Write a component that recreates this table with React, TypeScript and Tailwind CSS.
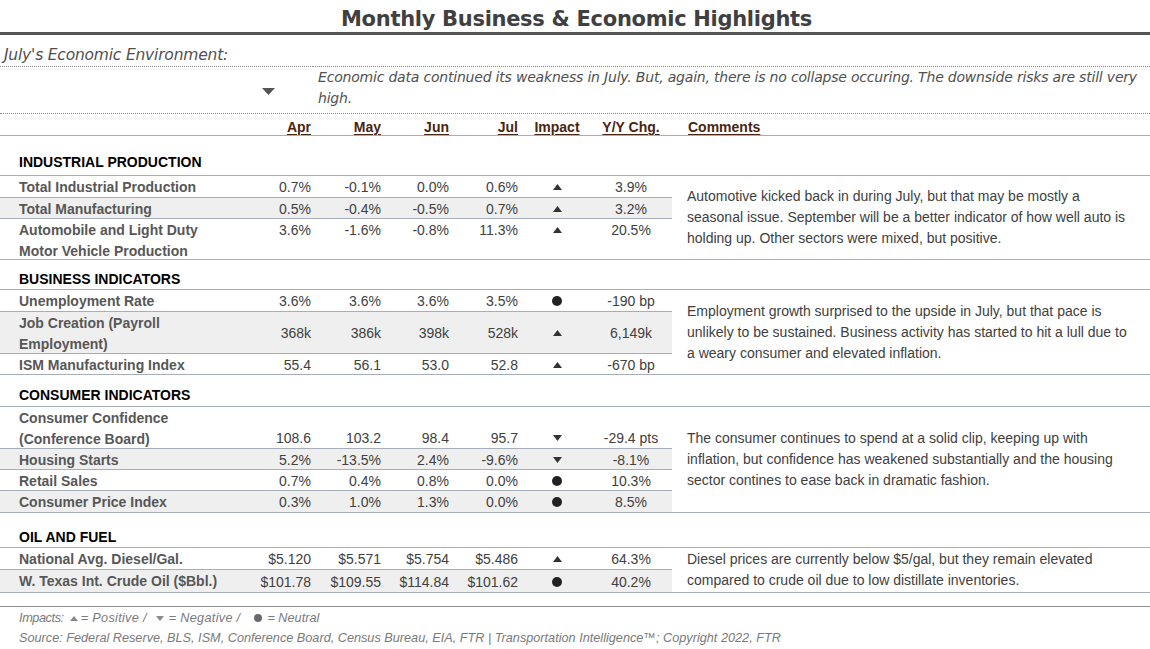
import React from "react";

type Impact = "up" | "down" | "dot";

interface Row {
  label: string[];
  vals: string[];
  imp: Impact;
  yy: string;
  h: string;
  align?: "start" | "center" | "end";
  gray?: boolean;
}

interface Section {
  title: string;
  head: string;
  comment: string[];
  rows: Row[];
}

const sections: Section[] = [
  {
    title: "INDUSTRIAL PRODUCTION",
    head: "h-[39px] pt-[16px]",
    comment: [
      "Automotive kicked back in during July, but that may be mostly a",
      "seasonal issue. September will be a better indicator of how well auto is",
      "holding up. Other sectors were mixed, but positive.",
    ],
    rows: [
      { label: ["Total Industrial Production"], vals: ["0.7%", "-0.1%", "0.0%", "0.6%"], imp: "up", yy: "3.9%", h: "h-[22px]" },
      { label: ["Total Manufacturing"], vals: ["0.5%", "-0.4%", "-0.5%", "0.7%"], imp: "up", yy: "3.2%", h: "h-[21px]", gray: true },
      {
        label: ["Automobile and Light Duty", "Motor Vehicle Production"],
        vals: ["3.6%", "-1.6%", "-0.8%", "11.3%"],
        imp: "up",
        yy: "20.5%",
        h: "h-[40px]",
        align: "start",
      },
    ],
  },
  {
    title: "BUSINESS INDICATORS",
    head: "h-[29px] pt-[9px]",
    comment: [
      "Employment growth surprised to the upside in July, but that pace is",
      "unlikely to be sustained. Business activity has started to hit a lull due to",
      "a weary consumer and elevated inflation.",
    ],
    rows: [
      { label: ["Unemployment Rate"], vals: ["3.6%", "3.6%", "3.6%", "3.5%"], imp: "dot", yy: "-190 bp", h: "h-[22px]" },
      {
        label: ["Job Creation (Payroll", "Employment)"],
        vals: ["368k", "386k", "398k", "528k"],
        imp: "up",
        yy: "6,149k",
        h: "h-[42px]",
        gray: true,
      },
      { label: ["ISM Manufacturing Index"], vals: ["55.4", "56.1", "53.0", "52.8"], imp: "up", yy: "-670 bp", h: "h-[20px]" },
    ],
  },
  {
    title: "CONSUMER INDICATORS",
    head: "h-[31px] pt-[10px]",
    comment: [
      "The consumer continues to spend at a solid clip, keeping up with",
      "inflation, but confidence has weakened substantially and the housing",
      "sector contines to ease back in dramatic fashion.",
    ],
    rows: [
      {
        label: ["Consumer Confidence", "(Conference Board)"],
        vals: ["108.6", "103.2", "98.4", "95.7"],
        imp: "down",
        yy: "-29.4 pts",
        h: "h-[42px]",
        align: "end",
      },
      { label: ["Housing Starts"], vals: ["5.2%", "-13.5%", "2.4%", "-9.6%"], imp: "down", yy: "-8.1%", h: "h-[21px]", gray: true },
      { label: ["Retail Sales"], vals: ["0.7%", "0.4%", "0.8%", "0.0%"], imp: "dot", yy: "10.3%", h: "h-[21px]" },
      { label: ["Consumer Price Index"], vals: ["0.3%", "1.0%", "1.3%", "0.0%"], imp: "dot", yy: "8.5%", h: "h-[21px]", gray: true },
    ],
  },
  {
    title: "OIL AND FUEL",
    head: "h-[34px] pt-[14px]",
    comment: [
      "Diesel prices are currently below $5/gal, but they remain elevated",
      "compared to crude oil due to low distillate inventories.",
    ],
    rows: [
      { label: ["National Avg. Diesel/Gal."], vals: ["$5.120", "$5.571", "$5.754", "$5.486"], imp: "up", yy: "64.3%", h: "h-[22px]" },
      {
        label: ["W. Texas Int. Crude Oil ($Bbl.)"],
        vals: ["$101.78", "$109.55", "$114.84", "$101.62"],
        imp: "dot",
        yy: "40.2%",
        h: "h-[22px]",
        gray: true,
      },
    ],
  },
];

const valWidths = ["w-[66px]", "w-[70px]", "w-[68px]", "w-[69px]"];

const UpIcon = () => (
  <svg width="9" height="6" viewBox="0 0 9 6">
    <path d="M4.5 0 L9 6 L0 6 Z" fill="#333" />
  </svg>
);

const DownIcon = () => (
  <svg width="9" height="6" viewBox="0 0 9 6">
    <path d="M0 0 L9 0 L4.5 6 Z" fill="#333" />
  </svg>
);

const DotIcon = () => (
  <svg width="10" height="10" viewBox="0 0 10 10">
    <circle cx="5" cy="5" r="5" fill="#222" />
  </svg>
);

const ImpactIcon = ({ kind }: { kind: Impact }) => {
  if (kind === "up") return <UpIcon />;
  if (kind === "down") return <DownIcon />;
  return <DotIcon />;
};

const alignClass = {
  start: "items-start",
  center: "items-center",
  end: "items-end",
};

const DataRow = ({ row, last }: { row: Row; last: boolean }) => (
  <div
    className={`flex ${row.h} ${last ? "" : "border-b border-[#a6aeb9]"} ${
      row.gray ? "bg-[#efefef]" : ""
    }`}
  >
    <div className="w-[245px] pl-[19px] pt-[1px] font-bold text-[#575757] leading-[20.5px]">
      {row.label.map((l) => (
        <div key={l}>{l}</div>
      ))}
    </div>
    <div className={`flex flex-1 ${alignClass[row.align ?? "center"]} pt-[1px]`}>
      {row.vals.map((v, i) => (
        <div key={i} className={`${valWidths[i]} text-right leading-[20px] text-[#404040]`}>
          {v}
        </div>
      ))}
      <div className="w-[78px] h-[20px] flex items-center justify-center">
        <ImpactIcon kind={row.imp} />
      </div>
      <div className="w-[70px] text-center leading-[20px] text-[#404040]">{row.yy}</div>
    </div>
  </div>
);

const App = () => {
  return (
    <div className="w-[1150px] h-[649px] bg-white overflow-hidden font-['Liberation_Sans',Arial,sans-serif] text-[14px]">
      <div className="h-[35px] border-b-[3px] border-[#555] flex items-center justify-center pt-[7px]">
        <span className="font-['DejaVu_Sans',sans-serif] font-bold text-[21px] tracking-[-0.3px] text-[#404040] pl-[3px]">
          Monthly Business &amp; Economic Highlights
        </span>
      </div>

      <div className="flex h-[32px]">
        <div className="w-[313px] border-b border-dotted border-[#8a8a8a] flex items-end pl-[4px] pb-[1px]">
          <span className="font-['DejaVu_Sans',sans-serif] italic text-[15.5px] tracking-[-0.2px] text-[#505050] leading-[20px]">
            July's Economic Environment:
          </span>
        </div>
        <div className="flex-1 border-b border-dotted border-[#7088c8]" />
      </div>

      <div className="flex h-[47px] border-b border-dotted border-[#8a8a8a]">
        <div className="w-[318px] flex items-center justify-end pr-[43px] pt-[3px]">
          <svg width="13" height="7" viewBox="0 0 13 7">
            <path d="M0 0 L13 0 L6.5 7 Z" fill="#555" />
          </svg>
        </div>
        <div className="font-['DejaVu_Sans',sans-serif] italic text-[14px] tracking-[-0.2px] text-[#505050] leading-[21px] whitespace-nowrap">
          Economic data continued its weakness in July. But, again, there is no collapse occuring. The downside risks are still very
          <br />
          high.
        </div>
      </div>

      <div className="flex h-[22px] border-b border-[#a6aeb9] items-start pt-[5px] font-bold text-[#4a2511] leading-[16px]">
        <div className="w-[245px]" />
        {["Apr", "May", "Jun", "Jul"].map((m, i) => (
          <div key={m} className={`${valWidths[i]} text-right`}>
            <span className="underline underline-offset-2">{m}</span>
          </div>
        ))}
        <div className="w-[78px] text-center">
          <span className="underline underline-offset-2">Impact</span>
        </div>
        <div className="w-[70px] text-center">
          <span className="underline underline-offset-2">Y/Y Chg.</span>
        </div>
        <div className="pl-[22px]">
          <span className="underline underline-offset-2">Comments</span>
        </div>
      </div>

      {sections.map((s) => (
        <div key={s.title}>
          <div className={`${s.head} pl-[19px] font-bold text-black leading-[20px]`}>{s.title}</div>
          <div className="flex border-y border-[#a6aeb9]">
            <div className="w-[673px] border-r border-white">
              {s.rows.map((r, i) => (
                <DataRow key={r.label[0]} row={r} last={i === s.rows.length - 1} />
              ))}
            </div>
            <div className="flex-1 flex items-center pl-[14px] text-[#404040] leading-[21px]">
              <div>
                {s.comment.map((c) => (
                  <div key={c} className="whitespace-nowrap">
                    {c}
                  </div>
                ))}
              </div>
            </div>
          </div>
        </div>
      ))}

      <div className="h-[14px] border-b border-[#8c8c8c]" />
      <div className="pl-[19px] italic text-[12.7px] text-[#7a7a7a] leading-[20px] pt-[1px]">
        <div className="flex items-center">
          <span className="tracking-[-0.4px]">Impacts:</span>
          <span className="ml-[6px] flex items-center">
            <svg width="8" height="5" viewBox="0 0 8 5">
              <path d="M4 0 L8 5 L0 5 Z" fill="#8a8a8a" />
            </svg>
          </span>
          <span className="ml-[3px] tracking-[0.3px]">= Positive /</span>
          <span className="ml-[9px] flex items-center">
            <svg width="8" height="5" viewBox="0 0 8 5">
              <path d="M0 0 L8 0 L4 5 Z" fill="#8a8a8a" />
            </svg>
          </span>
          <span className="ml-[5px] tracking-[0.3px]">= Negative /</span>
          <span className="ml-[14px] flex items-center">
            <svg width="8" height="8" viewBox="0 0 8 8">
              <circle cx="4" cy="4" r="4" fill="#6a6a6a" />
            </svg>
          </span>
          <span className="ml-[5px]">= Neutral</span>
        </div>
        <div className="border-b border-[#e6e6e6] pb-[1px]">
          Source: Federal Reserve, BLS, ISM, Conference Board, Census Bureau, EIA, FTR | Transportation Intelligence™; Copyright 2022, FTR
        </div>
      </div>
    </div>
  );
};

export default App;
